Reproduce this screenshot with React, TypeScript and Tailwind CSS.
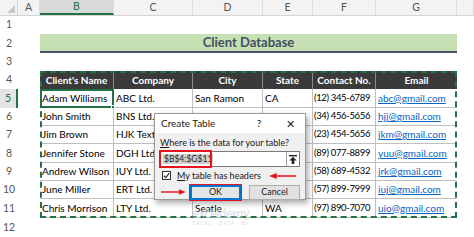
import React from "react";

const COLS = [
  { key: "A", w: "w-[22px]" },
  { key: "B", w: "w-[74px]" },
  { key: "C", w: "w-[79px]" },
  { key: "D", w: "w-[70px]" },
  { key: "E", w: "w-[50px]" },
  { key: "F", w: "w-[63px]" },
  { key: "G", w: "w-[81px]" },
  { key: "H", w: "flex-1" },
];

// row heights for rows 1..12
const ROW_H = ["h-[18px]", "h-[19px]", "h-[18px]", "h-[18px]", "h-[19px]", "h-[18px]", "h-[18px]", "h-[19px]", "h-[18px]", "h-[18px]", "h-[19px]", "h-[19px]"];

const HEAD = ["Client's Name", "Company", "City", "State", "Contact No.", "Email"];
const TABLE_W = ["w-[74px]", "w-[79px]", "w-[70px]", "w-[50px]", "w-[63px]", "w-[81px]"];

const DATA = [
  ["Adam Williams", "ABC Ltd.", "San Ramon", "CA", "(12) 345-6789", "abc@gmail.com"],
  ["John Smith", "BNS Ltd.", "Dallas", "TX", "(34) 456-5656", "hjj@gmail.com"],
  ["Jim Brown", "HJK Textile", "Austin", "TX", "(23) 454-5656", "jkm@gmail.com"],
  ["Jennifer Stone", "DGH Ltd.", "Denver", "CO", "(89) 077-8899", "yuu@gmail.com"],
  ["Andrew Wilson", "IUY Ltd.", "Boston", "MA", "(58) 689-4532", "jrk@gmail.com"],
  ["June Miller", "ERT Ltd.", "Miami", "FL", "(57) 899-7999", "iuj@gmail.com"],
  ["Chris Morrison", "LTY Ltd.", "Seatle", "WA", "(97) 890-7070", "uio@gmail.com"],
];

function RedArrow({ dir, className }: { dir: "left" | "right"; className: string }) {
  return (
    <svg className={className} viewBox="0 0 28 8" fill="none">
      {dir === "left" ? (
        <>
          <line x1="6" y1="4" x2="28" y2="4" stroke="#e8141b" strokeWidth="1.6" />
          <path d="M0 4 L8 0.8 L8 7.2 Z" fill="#e8141b" />
        </>
      ) : (
        <>
          <line x1="0" y1="4" x2="22" y2="4" stroke="#e8141b" strokeWidth="1.6" />
          <path d="M28 4 L20 0.8 L20 7.2 Z" fill="#e8141b" />
        </>
      )}
    </svg>
  );
}

function CreateTableDialog() {
  return (
    <div className="absolute left-[154px] top-[113px] w-[152px] h-[87px] flex flex-col bg-[#f0f0f0] border border-[#9a9a9a] shadow-[2px_3px_6px_rgba(0,0,0,0.35)] text-[9px] text-[#1a1a1a] whitespace-nowrap font-['Lato',sans-serif]">
      {/* title bar */}
      <div className="h-[19px] shrink-0 bg-white flex items-center pl-[6px] pr-[10px]">
        <span className="flex-1 text-[10px]">Create Table</span>
        <span className="w-[10px] text-[10px] mr-[22px] text-center">?</span>
        <span className="text-[11px] leading-none">✕</span>
      </div>
      <div className="flex flex-col px-[5px] pt-[3px]">
        <div className="h-[14px] leading-[14px]">
          <span className="underline">W</span>here is the data for your table?
        </div>
        {/* range input */}
        <div className="h-[16px] shrink-0 mt-[1px] flex bg-white border border-[#7a7a7a]">
          <div className="relative w-[51px] h-full flex items-center">
            <span className="ml-[2px] px-[1px] bg-[#cfcfcf] text-[8.5px] leading-[10px] text-[#222]">$B$4:$G$11</span>
            <div className="absolute -left-[2px] -top-[2px] w-[53px] h-[18px] border-2 border-[#e8141b]" />
          </div>
          <div className="flex-1" />
          <div className="w-[13px] border-l border-[#a0a0a0] flex items-center justify-center">
            <svg width="8" height="9" viewBox="0 0 8 9">
              <rect x="0" y="0" width="8" height="1.4" fill="#222" />
              <path d="M4 1.8 L7.6 5.4 L5.3 5.4 L5.3 9 L2.7 9 L2.7 5.4 L0.4 5.4 Z" fill="#222" />
            </svg>
          </div>
        </div>
        {/* checkbox row */}
        <div className="h-[13px] shrink-0 mt-[2px] flex items-center">
          <div className="w-[9px] h-[9px] shrink-0 ml-[2px] bg-white border border-[#333] flex items-center justify-center">
            <svg width="7" height="7" viewBox="0 0 7 7">
              <path d="M0.8 3.6 L2.8 5.6 L6.3 1.2" stroke="#222" strokeWidth="1.1" fill="none" />
            </svg>
          </div>
          <span className="ml-[6px]">
            <span className="underline">M</span>y table has headers
          </span>
          <RedArrow dir="left" className="w-[27px] h-[8px] shrink-0 ml-[8px]" />
        </div>
        {/* buttons */}
        <div className="h-[18px] shrink-0 mt-[1px] flex items-center">
          <RedArrow dir="right" className="w-[25px] h-[8px] shrink-0 ml-[1px]" />
          <div className="ml-[4px] w-[51px] h-[15px] shrink-0 bg-[#e5e5e5] border-2 border-[#0078d7] outline outline-1 outline-[#e8141b] flex items-center justify-center text-[9px]">
            OK
          </div>
          <div className="ml-[8px] w-[51px] h-[15px] shrink-0 bg-[#e1e1e1] border border-[#adadad] flex items-center justify-center text-[9px]">
            Cancel
          </div>
        </div>
      </div>
    </div>
  );
}

export default function App() {
  return (
    <div className="relative w-[474px] h-[237px] overflow-hidden bg-white font-['Lato',sans-serif] text-[10px] text-black">
      {/* column headers */}
      <div className="flex h-[16px] bg-[#f3f3f3] border-b border-[#d4d4d4] text-[10.5px] text-[#555]">
        <div className="w-[18px] h-full relative border-r border-[#d4d4d4]">
          <div className="absolute right-[2px] bottom-[2px] w-0 h-0 border-l-[8px] border-l-transparent border-b-[8px] border-b-[#c8c8c8]" />
        </div>
        {COLS.map(c => (
          <div
            key={c.key}
            className={`${c.w} h-full flex items-center justify-center border-r border-[#dcdcdc] ${
              c.key === "B" ? "bg-[#d9d9d9] text-[#217346] border-b-2 border-b-[#217346]" : ""
            }`}
          >
            {c.key === "H" ? "" : c.key}
          </div>
        ))}
      </div>

      <div className="flex">
        {/* row numbers */}
        <div className="w-[18px] flex flex-col text-[10.5px] text-[#555]">
          {ROW_H.map((h, i) => (
            <div
              key={i}
              className={`${h} flex items-center justify-center ${
                i === 4 ? "bg-[#e4e4e4] text-[#217346] border-r-2 border-[#217346]" : ""
              }`}
            >
              {i + 1}
            </div>
          ))}
        </div>

        {/* column A */}
        <div className="w-[22px]" />

        {/* B..G */}
        <div className="w-[417px] flex flex-col">
          <div className="h-[18px]" />
          <div className="h-[19px] bg-[#c6e0b4] border-b-2 border-[#44546a] flex items-center justify-center font-bold text-[13px] text-[#3f5160]">
            Client Database
          </div>
          <div className="h-[18px]" />

          {/* table B4:G11 with copy marquee */}
          <div className="relative flex flex-col">
            <div className="h-[18px] flex bg-[#3a3a3a] text-white font-bold text-[10px]">
              {HEAD.map((h, i) => (
                <div key={h} className={`${TABLE_W[i]} flex items-center justify-center whitespace-nowrap border-r border-[#8a8a8a] last:border-r-0`}>
                  {h}
                </div>
              ))}
            </div>
            {DATA.map((row, r) => (
              <div key={r} className={`${ROW_H[r + 4]} flex border-b border-[#bfbfbf]`}>
                {row.map((cell, i) => (
                  <div
                    key={i}
                    className={`${TABLE_W[i]} flex items-center border-r border-[#bfbfbf] last:border-r-0 whitespace-nowrap overflow-hidden ${
                      i === 5 ? "pl-[2px] text-[#0563c1] underline" : i === 4 ? "pl-[1px] text-[9.5px] tracking-[-0.35px]" : "pl-[2px]"
                    }`}
                  >
                    {cell}
                  </div>
                ))}
              </div>
            ))}
            {/* marquee */}
            <div className="absolute inset-0 border-2 border-dashed border-[#217346] pointer-events-none" />
            {/* active cell B5 */}
            <div className="absolute left-0 top-[18px] w-[74px] h-[19px] border-2 border-[#217346] pointer-events-none">
              <div className="absolute -right-[3px] -bottom-[3px] w-[4px] h-[4px] bg-[#217346] border border-white" />
            </div>
          </div>
          <div className="h-[19px]" />
        </div>
      </div>

      {/* watermark */}
      <div className="absolute left-[192px] top-[206px] flex flex-col items-center text-[#c3cfdd] opacity-70 pointer-events-none">
        <span className="text-[13px] leading-[14px] tracking-tight">exceldemy</span>
        <span className="text-[5px] tracking-[1px]">EXCEL · DATA · BI</span>
      </div>

      <CreateTableDialog />
    </div>
  );
}
